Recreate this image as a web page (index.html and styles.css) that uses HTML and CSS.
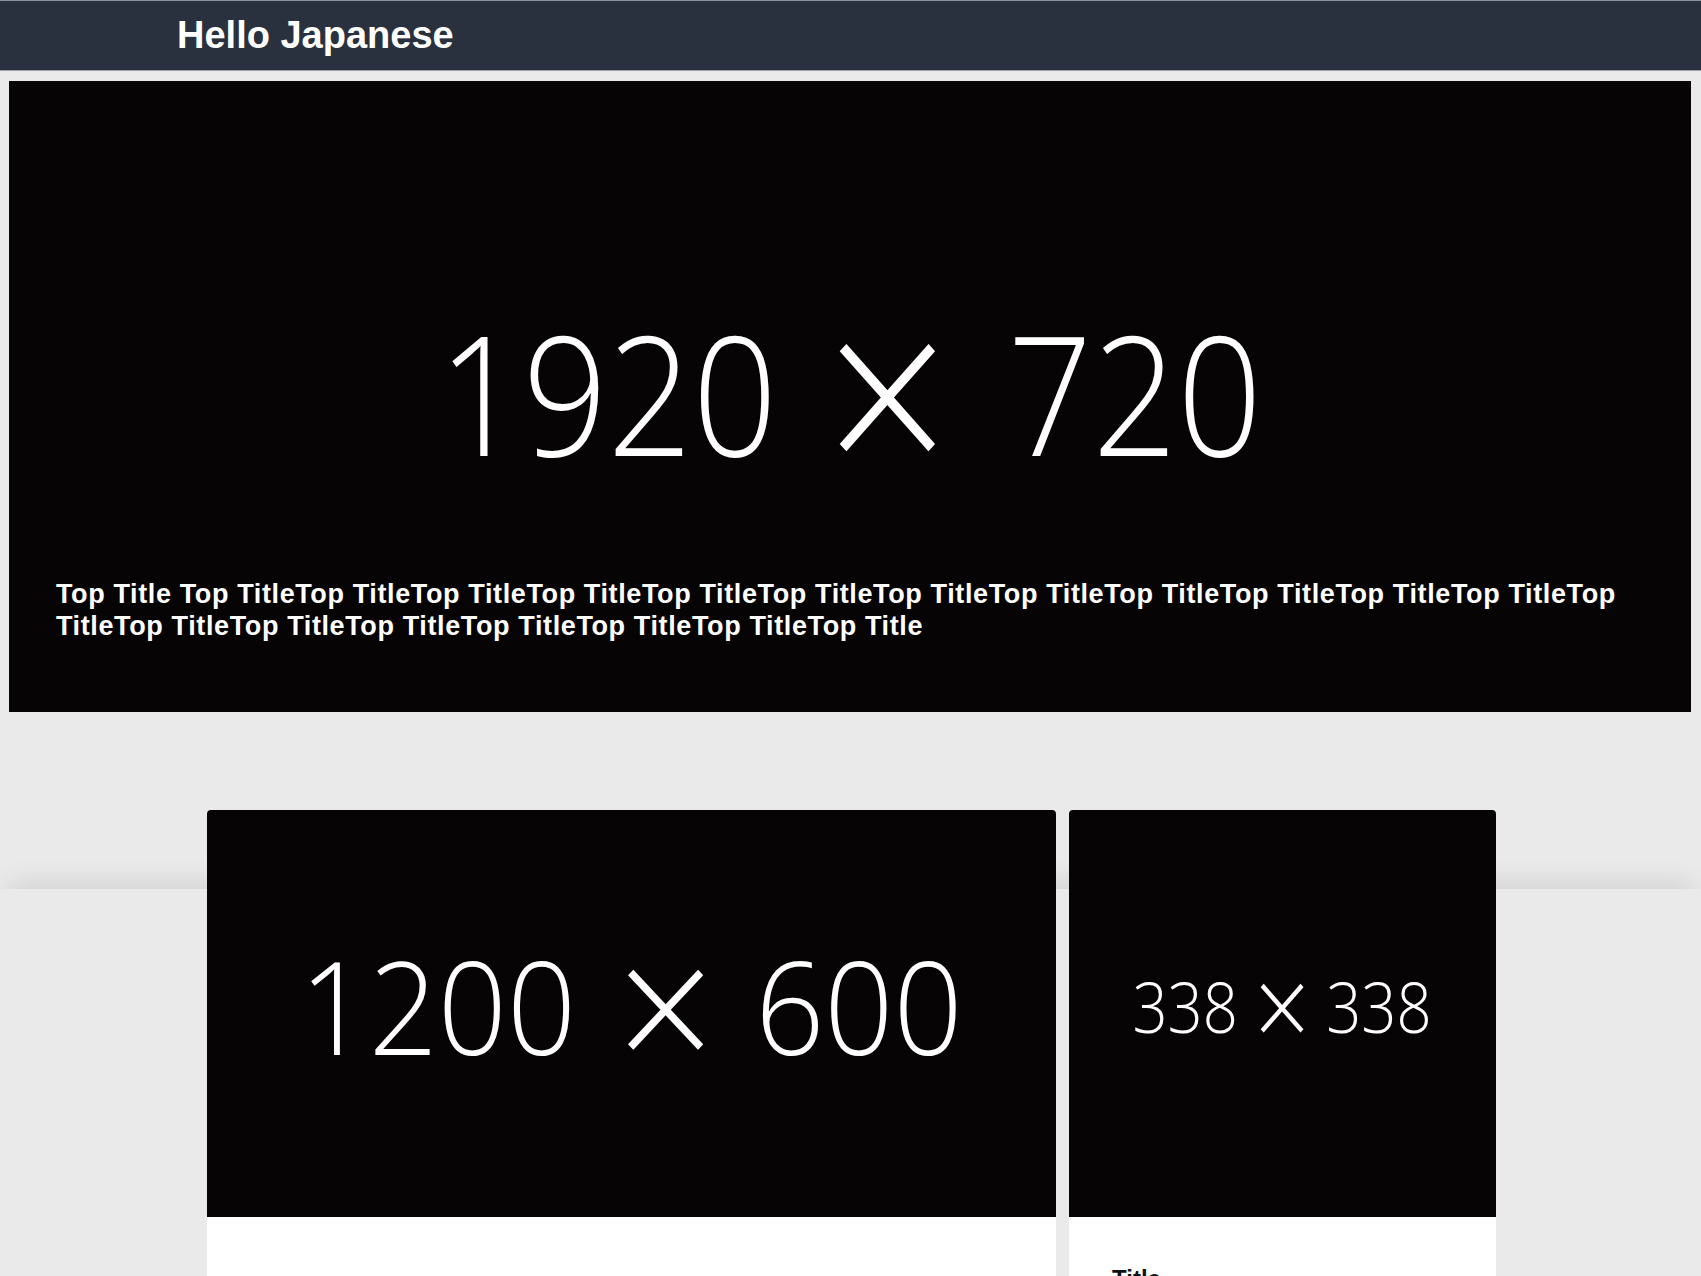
FILE: index.html
```html
<!DOCTYPE html>
<html lang="ja">
<head>
<meta charset="utf-8">
<title>Hello Japanese</title>
<link rel="stylesheet" href="styles.css">
</head>
<body>
<header class="site-header">
  <div class="header-inner">
    <h1 class="site-title">Hello Japanese</h1>
  </div>
</header>

<section class="hero">
  <div class="placeholder placeholder--hero">1920 <span class="ph-x">×</span> 720</div>
  <p class="hero-caption">Top Title Top TitleTop TitleTop TitleTop TitleTop TitleTop TitleTop TitleTop TitleTop TitleTop TitleTop TitleTop TitleTop TitleTop TitleTop TitleTop TitleTop TitleTop TitleTop TitleTop Title</p>
</section>

<main class="content">
  <div class="cards">
    <article class="card card--wide">
      <div class="card-media">
        <span class="placeholder placeholder--wide">1200 <span class="ph-x">×</span> 600</span>
      </div>
      <div class="card-body"></div>
    </article>
    <article class="card card--narrow">
      <div class="card-media">
        <span class="placeholder placeholder--square">338 <span class="ph-x">×</span> 338</span>
      </div>
      <div class="card-body">
        <h2 class="card-title">Title</h2>
      </div>
    </article>
  </div>
</main>
</body>
</html>
```
FILE: styles.css
```css
html, body {
  margin: 0;
  padding: 0;
}

body {
  background: #eaeaea;
  font-family: "Liberation Sans", Arial, sans-serif;
  color: #111;
}

.site-header {
  box-sizing: border-box;
  height: 71px;
  background: #2a313e;
  border-top: 1px solid #8d939c;
  border-bottom: 1px solid #9ba0a8;
}

.header-inner {
  max-width: 1347px;
  height: 100%;
  margin: 0 auto;
  display: flex;
  align-items: center;
}

.site-title {
  margin: 0;
  font-size: 38px;
  font-weight: 700;
  color: #ffffff;
}

.hero {
  position: relative;
  height: 631px;
  margin: 10px 10px 0 9px;
  background: #070405;
  display: flex;
  align-items: center;
  justify-content: center;
}

/* placeholder image labels */
.placeholder {
  display: inline-block;
  font-family: "Open Sans", sans-serif;
  font-weight: 300;
  color: #ffffff;
  line-height: 1;
  white-space: nowrap;
  transform: translateY(var(--dy)) scaleX(var(--sx));
}

.ph-x {
  font-size: calc(var(--xs) * 1em);
  line-height: 0;
  margin: 0 var(--xr) 0 var(--xl);
  vertical-align: calc(-0.357em * (var(--xs) - 1) / var(--xs));
}

.placeholder--hero {
  font-size: 167px;
  --sx: 0.89;
  --dy: -5px;
  --xs: 1.48;
  --xl: 0.04em;
  --xr: 0.085em;
}

.placeholder--wide {
  font-size: 129px;
  --sx: 0.939;
  --dy: -8px;
  --xs: 1.43;
  --xl: 0.05em;
  --xr: 0.05em;
}

.placeholder--square {
  font-size: 70px;
  --sx: 0.88;
  --dy: -8px;
  --xs: 1.6;
  --xl: 0;
  --xr: 0;
}

.hero-caption {
  position: absolute;
  left: 47px;
  right: 50px;
  bottom: 70px;
  margin: 0;
  font-size: 27px;
  font-weight: 700;
  letter-spacing: 0.62px;
  line-height: 32px;
  color: #ffffff;
}

.content {
  display: flow-root;
  position: relative;
  margin-top: 177px;
  min-height: 700px;
  background: #eaeaea;
  box-shadow: 0 -12px 26px -8px rgba(0, 0, 0, 0.12);
}

.cards {
  position: relative;
  z-index: 1;
  display: grid;
  grid-template-columns: 849px 427px;
  gap: 13px;
  justify-content: center;
  margin: -79px 0 0 2px;
}

.card {
  background: #ffffff;
  border-radius: 4px 4px 0 0;
  overflow: hidden;
}

.card-media {
  height: 407px;
  background: #070405;
  display: flex;
  align-items: center;
  justify-content: center;
}

.card-body {
  min-height: 320px;
  padding: 48px 43px 60px;
}

.card-title {
  margin: 0;
  font-size: 24px;
  font-weight: 700;
  color: #111111;
}
```
